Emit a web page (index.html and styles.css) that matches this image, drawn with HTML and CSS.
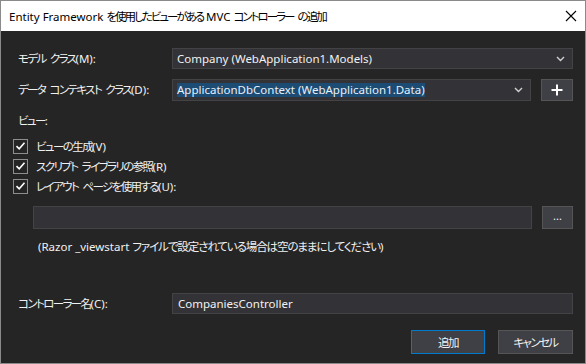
FILE: index.html
```html
<!DOCTYPE html>
<html lang="ja">
<head>
<meta charset="utf-8">
<link rel="stylesheet" href="styles.css">
</head>
<body>
<div class="window">
  <div class="titlebar">
    <span class="title">Entity Framework <span class="ja">を使用したビューがある</span> MVC <span class="ja">コントローラー の追加</span></span>
    <svg class="close" width="12" height="12" viewBox="0 0 12 12"><path d="M1 1L11 11M11 1L1 11" stroke="#000" stroke-width="1.1" fill="none"/></svg>
  </div>
  <div class="content">
    <div class="row row1">
      <span class="label"><span class="ja">モデル クラス</span>(M):</span>
      <div class="combo"><span class="val">Company (WebApplication1.Models)</span>
        <svg class="chev" width="9" height="6" viewBox="0 0 9 6"><path d="M1 1L4.5 4.5L8 1" stroke="#d0d0d0" stroke-width="1.4" fill="none"/></svg></div>
    </div>
    <div class="row row2">
      <span class="label"><span class="ja">データ コンテキスト クラス</span>(D):</span>
      <div class="combo"><span class="val sel">ApplicationDbContext (WebApplication1.Data)</span>
        <svg class="chev" width="9" height="6" viewBox="0 0 9 6"><path d="M1 1L4.5 4.5L8 1" stroke="#d0d0d0" stroke-width="1.4" fill="none"/></svg></div>
      <div class="btn plus"><svg width="12" height="12" viewBox="0 0 12 12"><path d="M6 0.5V11.5M0.5 6H11.5" stroke="#fff" stroke-width="2" fill="none"/></svg></div>
    </div>
    <div class="section"><span class="ja">ビュー</span>:</div>
    <div class="checks">
      <div class="check"><span class="box"><svg width="11" height="10" viewBox="0 0 11 10"><path d="M1.5 5.2L4.2 7.8L9.5 1.8" stroke="#fff" stroke-width="1.6" fill="none"/></svg></span><span><span class="ja">ビューの生成</span>(V)</span></div>
      <div class="check"><span class="box"><svg width="11" height="10" viewBox="0 0 11 10"><path d="M1.5 5.2L4.2 7.8L9.5 1.8" stroke="#fff" stroke-width="1.6" fill="none"/></svg></span><span><span class="ja">スクリプト ライブラリの参照</span>(R)</span></div>
      <div class="check"><span class="box"><svg width="11" height="10" viewBox="0 0 11 10"><path d="M1.5 5.2L4.2 7.8L9.5 1.8" stroke="#fff" stroke-width="1.6" fill="none"/></svg></span><span><span class="ja">レイアウト ページを使用する</span>(U):</span></div>
    </div>
    <div class="layoutrow">
      <div class="input wide"></div>
      <div class="btn dots">...</div>
    </div>
    <div class="hint">(Razor _viewstart <span class="ja">ファイルで設定されている場合は空のままにしてください</span>)</div>
    <div class="row row3">
      <span class="label"><span class="ja">コントローラー名</span>(C):</span>
      <div class="input"><span class="val">CompaniesController</span></div>
    </div>
    <div class="actions">
      <div class="btn action primary"><span class="ja">追加</span></div>
      <div class="btn action"><span class="ja">キャンセル</span></div>
    </div>
  </div>
</div>
</body>
</html>
```
FILE: styles.css
```css
html, body {
  margin: 0;
  padding: 0;
  background: #252526;
}
body {
  font-family: "Noto Sans", "Noto Sans CJK JP", sans-serif;
  font-size: 11.5px;
  font-feature-settings: "palt";
  color: #f1f1f1;
}
.ja {
  letter-spacing: -1.6px;
  word-spacing: 2.8px;
}
.title .ja {
  letter-spacing: -2px;
  word-spacing: 3.2px;
}
.hint .ja {
  letter-spacing: -1.1px;
  word-spacing: 2.2px;
}
.window {
  width: 586px;
  height: 364px;
  box-sizing: border-box;
  border: 1px solid #8a8a8a;
  background: #252526;
  display: flex;
  flex-direction: column;
}
.titlebar {
  height: 30px;
  background: #ffffff;
  color: #000;
  display: flex;
  align-items: center;
  justify-content: space-between;
  padding: 0 8px 0 8px;
  flex: none;
}
.title {
  line-height: 16px;
  margin-top: 1px;
}
.content {
  padding: 17px 12px 0 17px;
  display: flex;
  flex-direction: column;
}
.row {
  display: grid;
  grid-template-columns: 154px 1fr;
  align-items: center;
  height: 21px;
}
.row2 {
  height: 22px;
  margin-top: 10px;
  grid-template-columns: 154px 1fr 32px;
}
.row2 .combo {
  margin-right: 10px;
  height: 22px;
}
.label {
  line-height: 16px;
  white-space: nowrap;
}
.combo, .input {
  height: 21px;
  box-sizing: border-box;
  background: #333337;
  border: 1px solid #434346;
  display: flex;
  align-items: center;
  justify-content: space-between;
  padding: 0 7px 0 4px;
}
.val {
  line-height: 14px;
  white-space: nowrap;
}
.sel {
  background: #1c4b74;
  color: #e8f0f8;
}
.chev {
  flex: none;
}
.btn {
  box-sizing: border-box;
  background: #3f3f46;
  border: 1px solid #555555;
  display: flex;
  align-items: center;
  justify-content: center;
  color: #f1f1f1;
}
.plus {
  height: 22px;
  width: 32px;
}
.section {
  margin-top: 12px;
  line-height: 16px;
}
.checks {
  margin-top: 7px;
  margin-left: -5px;
  display: flex;
  flex-direction: column;
}
.check {
  height: 20px;
  display: flex;
  align-items: center;
}
.box {
  width: 15px;
  height: 15px;
  box-sizing: border-box;
  border: 1px solid #8e8e8e;
  display: flex;
  align-items: center;
  justify-content: center;
  margin-right: 8px;
  flex: none;
}
.layoutrow {
  margin-top: 10px;
  margin-left: 15px;
  display: flex;
  height: 23px;
}
.input.wide {
  flex: 1;
  height: 23px;
  margin-right: 10px;
}
.dots {
  width: 31px;
  height: 23px;
  font-size: 11px;
  line-height: 10px;
  padding-bottom: 3px;
}
.hint {
  margin-top: 10px;
  margin-left: 20px;
  line-height: 16px;
  white-space: nowrap;
}
.row3 {
  margin-top: 38px;
  height: 21px;
}
.row3 .input {
  padding-left: 5px;
}
.actions {
  margin-top: 16px;
  display: flex;
  justify-content: flex-end;
  gap: 13px;
}
.action {
  width: 75px;
  height: 24px;
}
.primary {
  width: 74px;
  border-color: #007acc;
}
```
